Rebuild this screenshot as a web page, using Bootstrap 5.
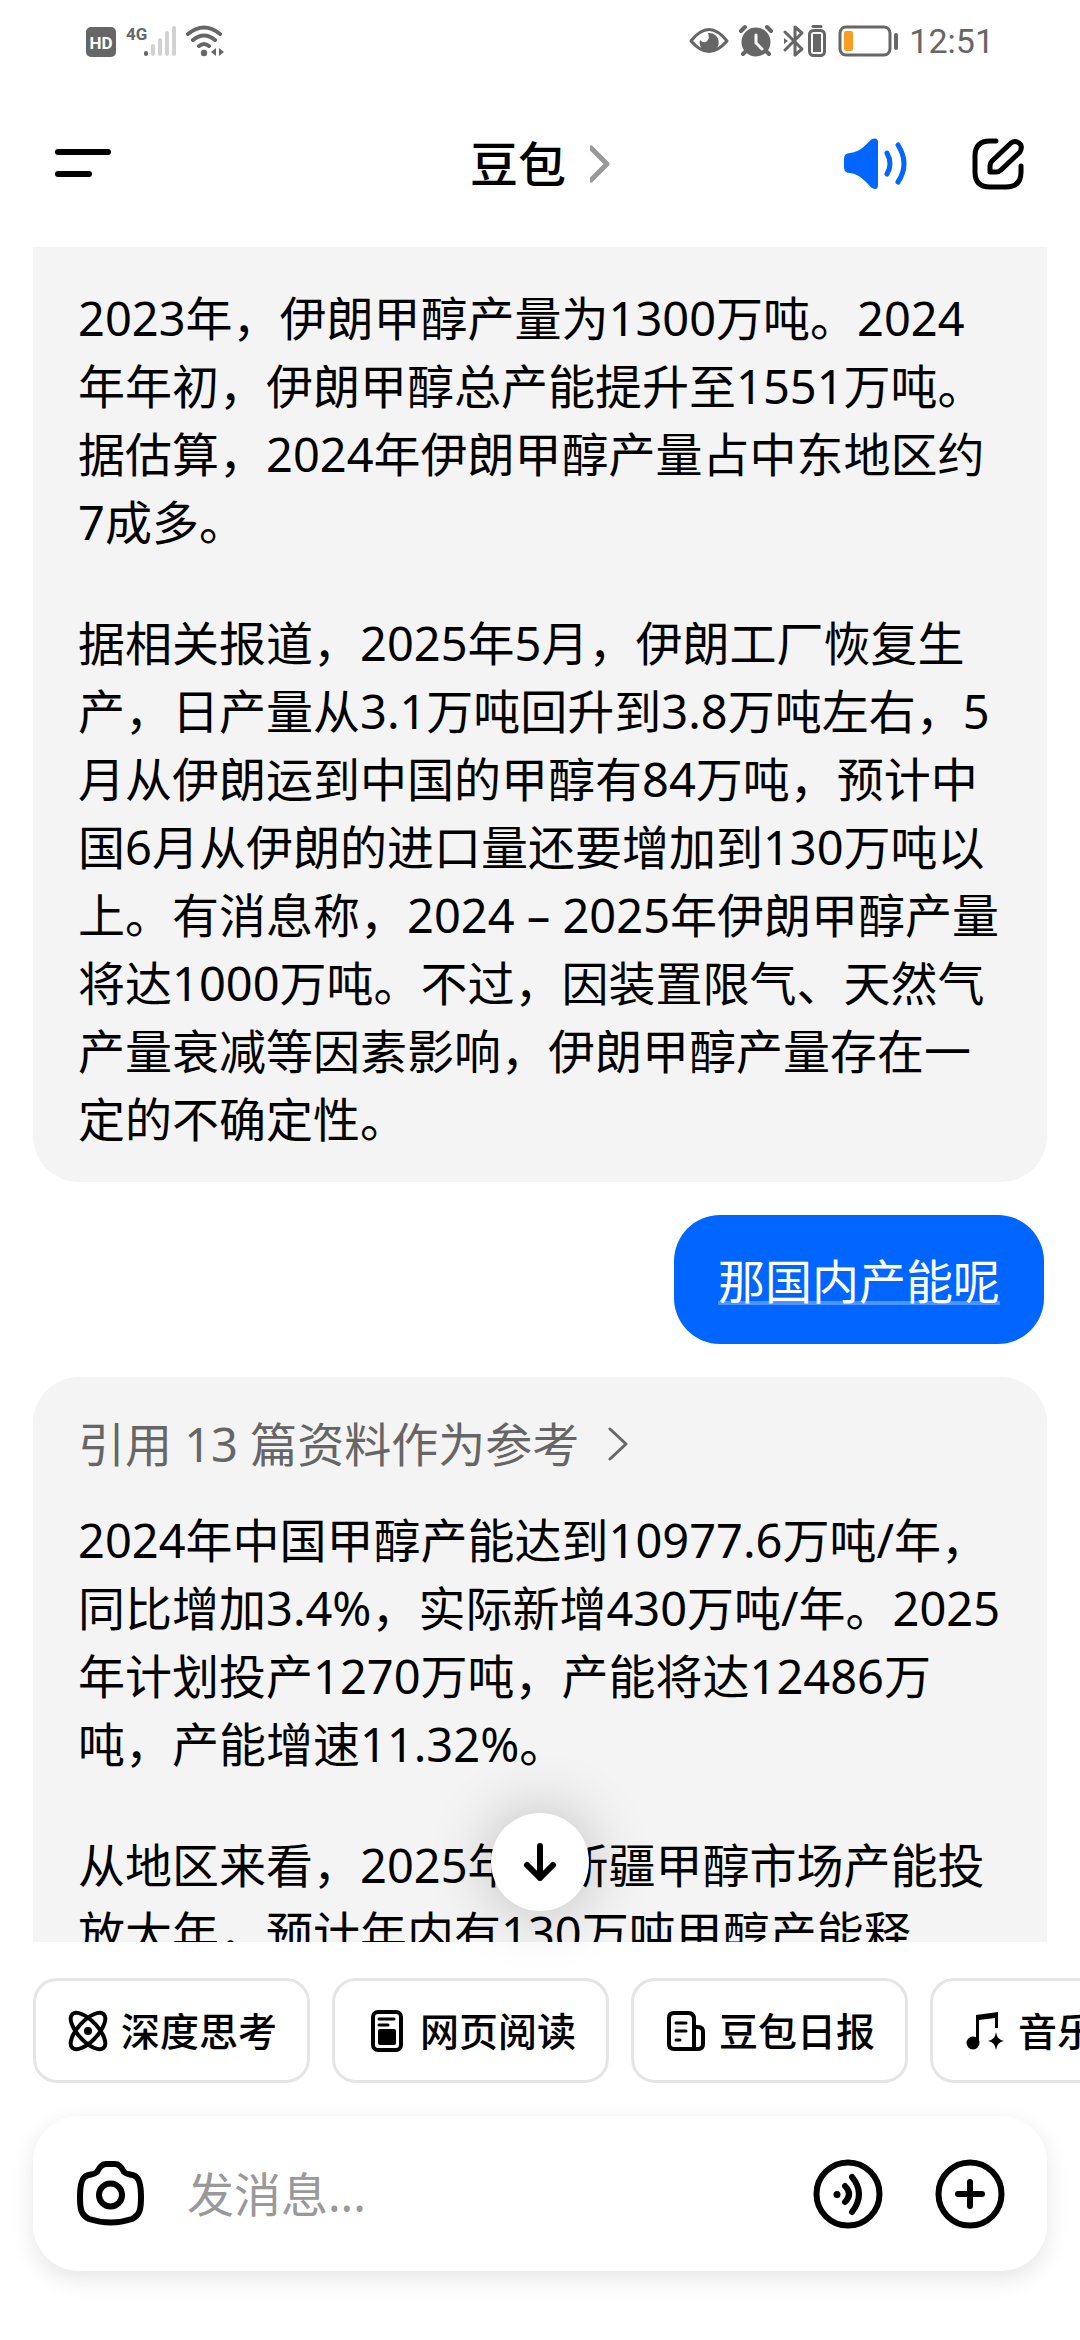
<!DOCTYPE html>
<html lang="zh-CN">
<head>
<meta charset="utf-8">
<meta name="viewport" content="width=device-width, initial-scale=1">
<title>豆包</title>
<link href="https://cdn.jsdelivr.net/npm/bootstrap@5.3.0/dist/css/bootstrap.min.css" rel="stylesheet">
<script src="https://cdn.jsdelivr.net/npm/bootstrap@5.3.0/dist/js/bootstrap.bundle.min.js"></script>
<style>
  body { font-family: "Noto Sans", "Noto Sans CJK SC", sans-serif; font-size: 47px; line-height: 68px; color: #000; background: #fff; }
  svg { display: block; flex: none; }
  .icon-btn { padding: 0; border: 0; background: none; color: #000; }
  .status-bar { height: 82px; padding: 0 86px; color: #666; }
  .clock { font-family: Roboto, sans-serif; font-size: 34px; line-height: 40px; }
  .app-bar { height: 165px; padding: 0 54px; }
  .app-title { font-size: 48px; font-weight: 500; line-height: 68px; color: #000; padding-bottom: 2px; }
  .app-actions { gap: 61px; padding-bottom: 2px; }
  .chat-scroll { min-height: 0; padding: 0 33px; gap: 33px; }
  .reply { background: #f4f4f4; padding: 33px 44px 29px 45px; border-radius: 46px; }
  .reply p { margin: 0 0 53px; }
  .reply p:last-child { margin-bottom: 0; }
  .reply-cut { border-radius: 0 0 46px 46px; padding-top: 37px; }
  .asked { background: #06f; color: #fff; border-radius: 46px; padding: 32px 44px 29px; margin-right: 3px; }
  .asked span { text-decoration: underline; text-decoration-color: #4d94ff; text-decoration-thickness: 4px; text-underline-offset: 2px; text-decoration-skip-ink: none; }
  .cite { color: #666; text-decoration: none; margin-bottom: 28px; gap: 29px; }
  .to-end { bottom: 31px; width: 98px; height: 98px; background: #fff; box-shadow: 0 0 64px rgba(0,0,0,.24); }
  .chips { padding: 36px 0 33px 33px; gap: 22px; }
  .chip { height: 105px; padding: 0 30px 0 31px; gap: 12px; border: 3px solid #e5e5e5; border-radius: 24px; background: #fff; color: #000; font-size: 39px; font-weight: 500; line-height: 60px; white-space: nowrap; }
  .composer { height: 155px; margin: 0 33px 69px; padding: 0 42px 0 43px; border-radius: 46px; background: #fff; box-shadow: 0 8px 24px rgba(0,0,0,.1); }
  .composer input { min-width: 0; margin-left: 41px; padding: 0; border: 0; outline: 0; background: none; height: 68px; }
  .composer input::placeholder { color: #999; opacity: 1; }
  .tools { gap: 52px; }
</style>
</head>
<body class="vh-100 d-flex flex-column overflow-hidden">

<div class="status-bar d-flex align-items-center justify-content-between flex-shrink-0">
  <svg width="140" height="40" viewBox="86 20 140 40" fill="none" role="img" aria-label="HD 4G">
    <rect x="86" y="26" width="30" height="30" rx="5" fill="#666"/>
    <text x="101" y="48" text-anchor="middle" font-family="Roboto" font-weight="700" font-size="17" fill="#fff">HD</text>
    <text x="126" y="39" font-family="Roboto" font-weight="700" font-size="17" fill="#666">4G</text>
    <g stroke-width="4" stroke-linecap="round" stroke="#d2d2d2"><path d="M146 52v1" stroke="#666"/><path d="M153 45v8M160 39v14M167 32v21M174 27v26"/></g>
    <g stroke="#666" stroke-width="4" stroke-linecap="round"><path d="M188 33q16-13 32 0M193 39q11-9 22 0M199 45q5-4 10 0"/></g>
    <circle cx="204" cy="52" r="3.200" fill="#666"/>
    <path d="M211 51l5-4v8zM224 51l-5-4v8z" fill="#666"/>
  </svg>
  <div class="d-flex align-items-center">
    <svg width="212" height="40" viewBox="688 20 212 40" fill="none">
      <path d="M690 40q18-23 36 0q-18 21-36 0z" stroke="#666" stroke-width="3" stroke-linejoin="round"/>
      <path d="M707 32a9.500 9.500 0 1 1-8 7q4 4 7 1t1-8z" fill="#666"/>
      <circle cx="755" cy="41" r="14.500" fill="#666"/>
      <path d="M740 30l4-4M770 30l-4-4M742 53l4-4M768 53l-4-4" stroke="#666" stroke-width="4" stroke-linecap="round"/>
      <path d="M755 34v8l6 6" stroke="#fff" stroke-width="3" stroke-linecap="round"/>
      <path d="M784 31l17 17-7 6V26l7 6-17 17" stroke="#666" stroke-width="3" stroke-linejoin="round" stroke-linecap="round"/>
      <path d="M783 37l4 3-4 3z" fill="#666"/>
      <rect x="808.500" y="29.500" width="15" height="25" rx="4" stroke="#666" stroke-width="3"/>
      <rect x="812" y="33" width="8" height="18" fill="#666"/><path d="M812 25.500h8" stroke="#666" stroke-width="3" stroke-linecap="round"/>
      <rect x="839" y="26" width="50" height="28" rx="6" stroke="#666" stroke-width="3"/>
      <rect x="843" y="30" width="9" height="20" rx="2" fill="#fa9d20"/>
      <path d="M895 34v13" stroke="#666" stroke-width="4" stroke-linecap="round"/>
    </svg>
    <span class="clock ms-2">12:51</span>
  </div>
</div>

<header class="app-bar d-flex align-items-center flex-shrink-0">
  <div class="col">
    <button class="icon-btn" aria-label="菜单">
      <svg width="58" height="40" viewBox="0 0 58 40" stroke="#000" stroke-width="6" stroke-linecap="round"><path d="M4 9h50M4 31h31"/></svg>
    </button>
  </div>
  <a href="#" class="d-flex align-items-center text-decoration-none app-title">豆包
    <svg class="ms-4" width="20" height="40" viewBox="0 0 20 40" fill="none" stroke="#999" stroke-width="5" stroke-linecap="round" stroke-linejoin="round"><path d="M1 4l16 16L1 36"/></svg>
  </a>
  <div class="app-actions col d-flex justify-content-end align-items-center">
    <button class="icon-btn" aria-label="朗读">
      <svg width="66" height="56" viewBox="842 135 66 56" fill="none">
        <path d="M843 158q0-6 6-6c11-1 17-10 22-14q6-2 6 3v43q0 6-6 3c-5-4-11-14-22-15q-6 0-6-6z" fill="#06f"/>
        <path d="M886 152q6 11 0 21M897 144q12 19 0 37" stroke="#06f" stroke-width="5" stroke-linecap="round"/>
      </svg>
    </button>
    <button class="icon-btn" aria-label="新对话">
      <svg width="56" height="56" viewBox="969 136 56 56" fill="none" stroke="#000" stroke-width="5" stroke-linecap="round" stroke-linejoin="round">
        <path d="M995 141h-6q-15 0-15 15v16q0 15 15 15h16q15 0 15-15v-6"/>
        <path d="M989 172v-6q0-3 2-5l19-18q4-3 8 0t1 9l-19 18q-2 2-5 2z"/>
      </svg>
    </button>
  </div>
</header>

<main class="position-relative flex-grow-1 d-flex flex-column" style="min-height:0">
  <div class="chat-scroll d-flex flex-column flex-grow-1 overflow-hidden">
    <article class="reply reply-cut flex-shrink-0">
      <p>2023年，伊朗甲醇产量为1300万吨。2024年年初，伊朗甲醇总产能提升至1551万吨。据估算，2024年伊朗甲醇产量占中东地区约7成多。</p>
      <p>据相关报道，2025年5月，伊朗工厂恢复生产，日产量从3.1万吨回升到3.8万吨左右，5月从伊朗运到中国的甲醇有84万吨，预计中国6月从伊朗的进口量还要增加到130万吨以上。有消息称，2024 – 2025年伊朗甲醇产量将达1000万吨。不过，因装置限气、天然气产量衰减等因素影响，伊朗甲醇产量存在一定的不确定性。</p>
    </article>
    <div class="asked align-self-end flex-shrink-0"><span>那国内产能呢</span></div>
    <article class="reply flex-shrink-0">
      <a href="#" class="cite d-flex align-items-center">引用 13 篇资料作为参考
        <svg width="20" height="36" viewBox="0 0 20 36" fill="none" stroke="#666" stroke-width="3" stroke-linecap="round" stroke-linejoin="round"><path d="M2 3l16 15L2 33"/></svg>
      </a>
      <p>2024年中国甲醇产能达到10977.6万吨/年，同比增加3.4%，实际新增430万吨/年。2025年计划投产1270万吨，产能将达12486万吨，产能增速11.32%。</p>
      <p>从地区来看，2025年，新疆甲醇市场产能投放大年，预计年内有130万吨甲醇产能释</p>
    </article>
  </div>
  <button class="to-end icon-btn position-absolute start-50 translate-middle-x rounded-circle d-flex align-items-center justify-content-center" aria-label="回到底部">
    <svg width="40" height="44" viewBox="0 0 40 44" fill="none" stroke="#000" stroke-width="6" stroke-linecap="round" stroke-linejoin="round"><path d="M20 6v32M7 25l13 13 13-13"/></svg>
  </button>
</main>

<footer class="flex-shrink-0">
  <div class="chips d-flex overflow-hidden">
    <button class="chip d-flex align-items-center flex-shrink-0">
      <svg width="42" height="42" viewBox="0 0 42 42" fill="none" stroke="#000" stroke-width="4"><ellipse cx="21" cy="21" rx="23" ry="10" transform="rotate(47 21 21)"/><ellipse cx="21" cy="21" rx="23" ry="10" transform="rotate(-47 21 21)"/><circle cx="21" cy="21" r="4" fill="#000" stroke="none"/></svg>
      深度思考</button>
    <button class="chip d-flex align-items-center flex-shrink-0">
      <svg width="42" height="42" viewBox="0 0 42 42" fill="none" stroke="#000"><rect x="7" y="2" width="28" height="38" rx="5" stroke-width="4"/><path d="M13 9h15M13 15h9" stroke-width="3" stroke-linecap="round"/><rect x="12" y="19" width="18" height="16" rx="2" fill="#000" stroke="none"/></svg>
      网页阅读</button>
    <button class="chip d-flex align-items-center flex-shrink-0">
      <svg width="42" height="42" viewBox="0 0 42 42" fill="none" stroke="#000" stroke-width="4" stroke-linecap="round" stroke-linejoin="round"><path d="M29 39H9q-5 0-5-5V8q0-5 5-5h14q6 0 6 6zM29 17h4q5 0 5 5v12q0 5-5 5h-4"/><path d="M11 13h10M11 21h10M11 30h4" stroke-width="3"/></svg>
      豆包日报</button>
    <button class="chip d-flex align-items-center flex-shrink-0">
      <svg width="42" height="42" viewBox="0 0 42 42"><circle cx="9" cy="33" r="6.500"/><path d="M12 5L34 2v16h-3V8l-16 2v23h-3z"/><path d="M32 22q1 8 8 9q-7 1-8 9q-1-8-8-9q7-1 8-9z"/></svg>
      音乐生成</button>
  </div>
  <form class="composer d-flex align-items-center">
    <button type="button" class="icon-btn" aria-label="拍照">
      <svg width="70" height="66" viewBox="76 2162 70 66" fill="none" stroke="#000" stroke-width="6" stroke-linejoin="round"><path d="M80 2198q0-18 6-21c4-2 8-1 11-4q4-8 9-8h9q5 0 9 8c3 3 7 2 11 4q6 3 6 21c0 12-1 18-9 22q-21 7-43 0c-8-4-9-10-9-22z"/><circle cx="110.500" cy="2196" r="11.500"/></svg>
    </button>
    <input class="flex-grow-1" type="text" placeholder="发消息..." aria-label="发消息">
    <div class="tools d-flex">
      <button type="button" class="icon-btn" aria-label="语音">
        <svg width="70" height="70" viewBox="0 0 70 70" fill="none" stroke="#000" stroke-width="6" stroke-linecap="round"><circle cx="35" cy="35" r="31.500"/><circle cx="24" cy="35.500" r="3.500" fill="#000" stroke="none"/><path d="M32 27q8 8 0 16M39 18q14 17 0 35"/></svg>
      </button>
      <button type="button" class="icon-btn" aria-label="更多">
        <svg width="70" height="70" viewBox="0 0 70 70" fill="none" stroke="#000" stroke-width="6" stroke-linecap="round"><circle cx="35" cy="35" r="31.500"/><path d="M35 23v24M23 35h24"/></svg>
      </button>
    </div>
  </form>
</footer>
</body>
</html>
